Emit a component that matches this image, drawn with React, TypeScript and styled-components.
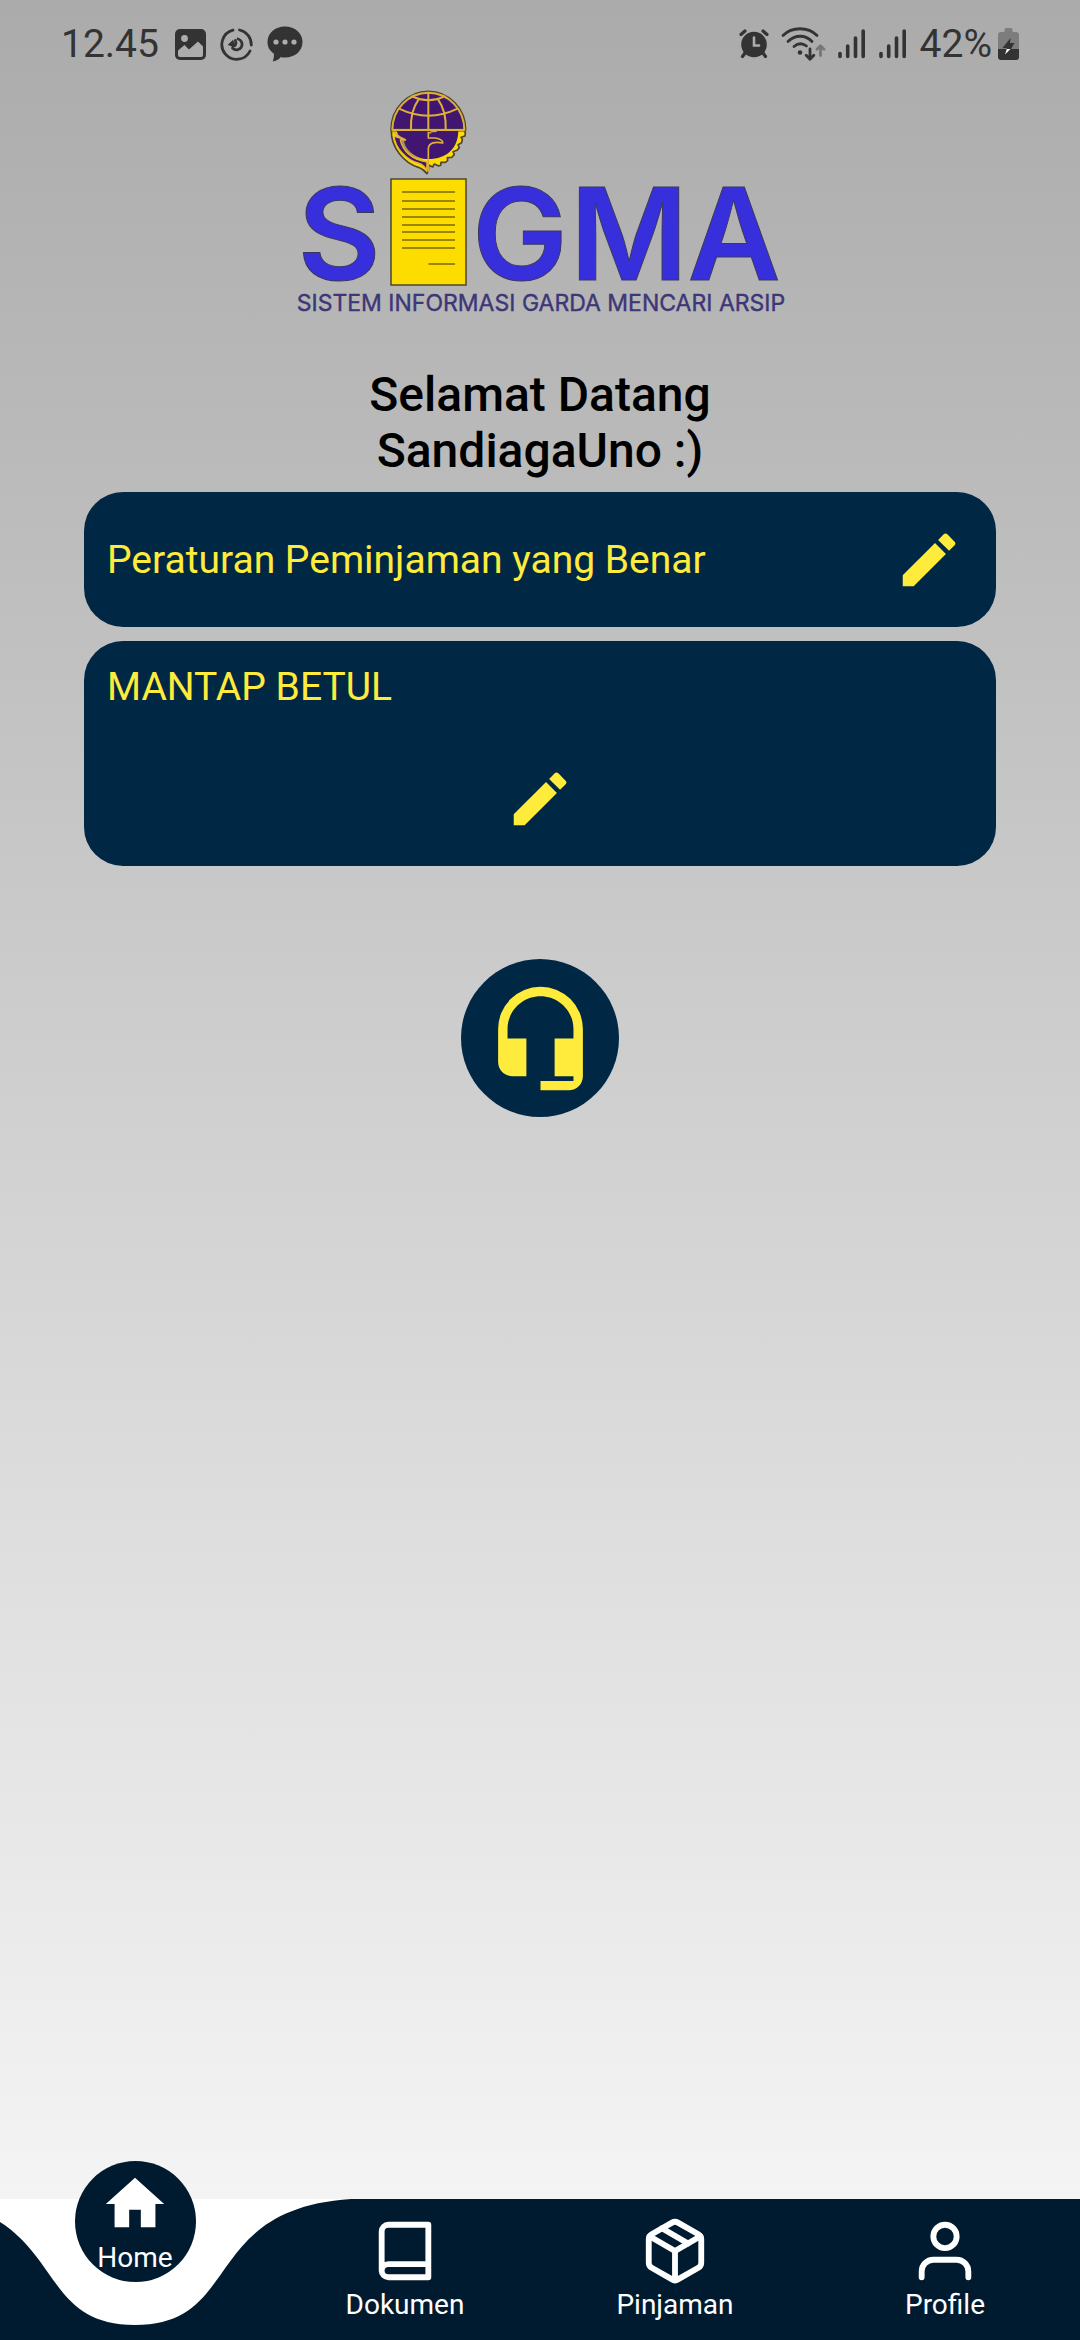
import React from "react";
import styled, { createGlobalStyle } from "styled-components";
import { MdEdit, MdHeadsetMic, MdHome } from "react-icons/md";
import { FiPackage, FiUser } from "react-icons/fi";

const colors = {
  card: "#002845",
  nav: "#001b30",
  accent: "#ffeb3b",
  status: "#333333",
  logoBlue: "#372fdc",
  logoEdge: "#3b3860",
};

const GlobalStyle = createGlobalStyle`
  *, *::before, *::after { box-sizing: border-box; }
  body { margin: 0; font-family: Roboto, "Noto Sans", sans-serif; }
  button { font: inherit; border: 0; cursor: pointer; }
`;

const Page = styled.div`
  min-height: 100vh;
  display: flex;
  flex-direction: column;
`;

const Screen = styled.div`
  flex: 1;
  display: flex;
  flex-direction: column;
  background: linear-gradient(#ababab, #f4f4f4);
`;

const StatusBar = styled.div`
  display: flex;
  justify-content: space-between;
  align-items: center;
  height: 86px;
  padding: 2px 61px 0;
  color: ${colors.status};
  font-size: 39px;
  line-height: 46px;
`;

const StatusGroup = styled.div<{ $gap: number }>`
  display: flex;
  align-items: center;
  gap: ${(p) => p.$gap}px;
  svg { display: block; }
`;

const Content = styled.main`
  display: flex;
  flex-direction: column;
  align-items: center;
  padding: 0 84px;
`;

const Logo = styled.svg`
  display: block;
  width: 500px;
  height: 230px;
`;

const Greeting = styled.h1`
  margin: 51px 0 13px;
  font-size: 48px;
  line-height: 56px;
  font-weight: 500;
  text-align: center;
  color: #000;
`;

const CardList = styled.div`
  align-self: stretch;
  display: flex;
  flex-direction: column;
  gap: 14px;
`;

const Card = styled.section<{ $stacked?: boolean }>`
  display: flex;
  flex-direction: ${(p) => (p.$stacked ? "column" : "row")};
  justify-content: space-between;
  align-items: center;
  gap: ${(p) => (p.$stacked ? 32 : 0)}px;
  padding: ${(p) => (p.$stacked ? "23px 23px 10px" : "11px 10px 10px 23px")};
  border-radius: 39px;
  background: ${colors.card};
  color: ${colors.accent};
`;

const CardText = styled.p<{ $stretch?: boolean }>`
  margin: 0;
  align-self: ${(p) => (p.$stretch ? "stretch" : "center")};
  font-size: 39px;
  line-height: 46px;
`;

const IconButton = styled.button`
  display: flex;
  padding: 22px;
  background: none;
  color: ${colors.accent};
`;

const SupportButton = styled.button`
  display: flex;
  align-items: center;
  justify-content: center;
  width: 158px;
  height: 158px;
  margin: 93px 0;
  padding: 0;
  border-radius: 50%;
  background: ${colors.card};
  color: ${colors.accent};
`;

const NavBar = styled.nav`
  position: relative;
  display: grid;
  grid-template-columns: repeat(4, 1fr);
  height: 141px;
  background: #fff;
`;

const NavShape = styled.svg`
  position: absolute;
  inset: 0;
  width: 100%;
  height: 100%;
`;

const NavItem = styled.button`
  position: relative;
  display: flex;
  flex-direction: column;
  align-items: center;
  gap: 3px;
  padding: 17px 0 0;
  background: none;
  color: #fff;
  font-size: 28px;
  line-height: 32px;
`;

const ActiveSlot = styled.div`
  position: relative;
  display: flex;
  justify-content: center;
`;

const ActiveItem = styled(NavItem)`
  position: absolute;
  top: -38px;
  width: 121px;
  height: 121px;
  padding-top: 8px;
  border-radius: 50%;
  background: ${colors.nav};
`;

const GalleryIcon = () => (
  <svg width="31" height="31" viewBox="0 0 31 31">
    <rect width="31" height="31" rx="5" fill={colors.status} />
    <circle cx="9.5" cy="9.5" r="3.4" fill="#adadad" />
    <path d="M3 21.500 9.500 16l4.500 4.500L23 12.500l5 5V26q0 2-2 2H5q-2 0-2-2Z" fill="#adadad" />
  </svg>
);

const SyncIcon = () => (
  <svg width="33" height="33" viewBox="0 0 33 33" fill="none" stroke={colors.status} strokeWidth="2.8" strokeLinecap="round">
    <path d="M13 2.200A14.800 14.800 0 1 0 30 23" />
    <path d="M19.500 2A14.800 14.800 0 0 1 31.300 17" />
    <path d="M11 16.500C16 20 16.500 15 15.300 12.500M18 11A5.500 5.500 0 1 1 12.500 20" />
    <path d="m8.500 16.500 4.500-4 2 5.500Z" fill={colors.status} strokeWidth="1" />
  </svg>
);

const ChatIcon = () => (
  <svg width="36" height="36" viewBox="0 0 36 36">
    <path d="M18 .5C8 .5.5 7 .5 16c0 5 2.300 9 6.300 11.500.4 3-.3 5.500-1 8 4-1 6.500-2.300 8-4.500 1.500.4 2.800.5 4.200.5 10 0 17.500-6.500 17.500-15.500S28 .5 18 .5Z" fill={colors.status} />
    <g fill="#adadad"><circle cx="9" cy="16" r="2.600" /><circle cx="18" cy="16" r="2.600" /><circle cx="27" cy="16" r="2.600" /></g>
  </svg>
);

const AlarmIcon = () => (
  <svg width="30" height="30" viewBox="0 0 30 30" fill="none" stroke={colors.status} strokeWidth="3.200" strokeLinecap="round">
    <circle cx="15" cy="15.500" r="12.800" fill={colors.status} stroke="none" />
    <path d="M2 5.500 6 2M28 5.500 24 2M6 24l-2.500 3.500M24 24l2.500 3.500" />
    <path d="M15 8.500V16.500H20" stroke="#adadad" strokeWidth="2.600" />
  </svg>
);

const WifiIcon = () => (
  <svg width="45" height="34" viewBox="0 0 45 34" fill="none" stroke={colors.status} strokeWidth="2.800" strokeLinecap="round" strokeLinejoin="round">
    <path d="M2 8.500C11-.5 27-.5 36 8.500M7 14.500C14 7.500 24.500 7.500 31 14.500M13 19.500C17 16 21.500 16 25.500 19" />
    <circle cx="19" cy="25.500" r="2.300" fill={colors.status} stroke="none" />
    <path d="M29 22V32M25.200 28.300 29 32.200 32.800 28.300" />
    <path d="M39.500 28.500V19M36 22.300 39.500 18.800 43 22.300" stroke="#777" />
  </svg>
);

const SignalIcon = () => (
  <svg width="27" height="30" viewBox="0 0 27 30" stroke={colors.status} strokeWidth="3.600" strokeLinecap="round">
    <path d="M2 24.500V27.500M9.700 17V27.500M17.500 9V27.500M25.200 2V27.500" />
  </svg>
);

const BatteryIcon = () => (
  <svg width="21" height="32" viewBox="0 0 21 32">
    <path d="M6.500 4V1.500Q6.500 0 8 0h5q1.500 0 1.500 1.500V4H18q3 0 3 3V21H0V7Q0 4 3 4Z" fill="#7d7d7d" />
    <path d="M0 21H21v8q0 3-3 3H3q-3 0-3-3Z" fill={colors.status} />
    <path d="M12.500 10 4.500 20H9l-.5 1h4.500L16.500 15H12Z" fill={colors.status} />
    <path d="M8.800 21 7 26.500 12.500 21Z" fill="#fff" />
  </svg>
);

const BookIcon = () => (
  <svg width="70" height="70" viewBox="0 0 24 24" fill="none" stroke="currentColor" strokeWidth="2" strokeLinecap="round" strokeLinejoin="round">
    <path d="M20 3H6.300A2.300 2.300 0 0 0 4 5.300V18.700A2.300 2.300 0 0 0 6.300 21H20ZM4 18.700A2.300 2.300 0 0 1 6.300 16.500H20" />
  </svg>
);

const paperLines = [337, 364, 387, 410, 434, 457, 481, 504];

const Emblem = () => (
  <g transform="translate(-10 -6) scale(0.33333)" fill="none" strokeLinejoin="round">
    <path d="M334 150C332 205 375 250 415 262Q432 268 441 281Q447 270 446 255L458 261 463 252 476 258 482 256 483 247 496 247 503 242 502 233 515 232 523 224 519 215 531 211 538 203 534 194 545 188 547 178 543 172 555 168 556 158 552 150Z" fill="#ffdc00" stroke="#4b4730" strokeWidth="5" />
    <path d="M335 150A110 114 0 0 1 555 150Z" fill="#401670" stroke="#4b4730" strokeWidth="9" />
    <path d="M350 153H535C534 205 500 237 445 237 405 237 370 215 350 153Z" fill="#401670" />
    <path d="M342 168C346 205 380 240 414 249Q435 255 440 274L441 246C395 240 368 212 361 180L377 180Z" fill="#401670" stroke="#e4b52d" strokeWidth="4" />
    <path d="M362 180C368 205 390 232 425 238 390 224 372 201 371 182Z" fill="#8d8a80" stroke="#e4b52d" strokeWidth="2" />
    <g stroke="#dfae38" strokeWidth="6">
      <path d="M337 150A108 112 0 0 1 553 150Z" />
      <path d="M445 36V150M396 49Q445 72 494 49M357 86Q445 128 533 86M416 58Q390 94 393 150M474 58Q500 94 497 150" />
      <path d="M340 156 361 172 377 180M445 275V205C447 188 466 184 488 189 490 180 476 176 466 174H445V155" strokeWidth="5" />
      <path d="M445 160 456 155 470 154" strokeWidth="4" />
    </g>
    <path d="M445 162 457 155 452 162Z" fill="#777" />
  </g>
);

const SigmaLogo = () => (
  <Logo viewBox="0 0 500 230" role="img" aria-label="Sigma">
    <Emblem />
    <rect x="101" y="93" width="75" height="106" fill="#fddc00" stroke="#4b4730" strokeWidth="1.500" />
    <g stroke="#9a8600" strokeWidth="2">
      {paperLines.map((y) => (
        <path key={y} d={`M112 ${Math.round(y / 3 - 6)}H165`} />
      ))}
      <path d="M138.500 178H165" />
    </g>
    <g fontFamily='Inter, "Liberation Sans", sans-serif' fontWeight="600" fontSize="128" fill={colors.logoBlue} stroke={colors.logoEdge} strokeWidth="1" textAnchor="middle">
      <text x="49" y="194">S</text>
      <text x="230" y="194">G</text>
      <text x="339" y="194">M</text>
      <text x="444" y="194">A</text>
    </g>
    <text x="251" y="225" textAnchor="middle" fontFamily='Inter, "Liberation Sans", sans-serif' fontWeight="400" fontSize="23" fill="#3d3777" stroke="#3d3777" strokeWidth="0.400">
      SISTEM INFORMASI GARDA MENCARI ARSIP
    </text>
  </Logo>
);

const navItems = [
  { label: "Dokumen", icon: <BookIcon /> },
  { label: "Pinjaman", icon: <FiPackage size={70} /> },
  { label: "Profile", icon: <FiUser size={70} /> },
];

export default function App() {
  return (
    <Page>
      <GlobalStyle />
      <Screen>
        <StatusBar>
          <StatusGroup $gap={16}>
            <span>12.45</span>
            <StatusGroup $gap={14}>
              <GalleryIcon />
              <SyncIcon />
              <ChatIcon />
            </StatusGroup>
          </StatusGroup>
          <StatusGroup $gap={12}>
            <AlarmIcon />
            <WifiIcon />
            <StatusGroup $gap={14}>
              <SignalIcon />
              <SignalIcon />
              <StatusGroup $gap={6}>
                <span>42%</span>
                <BatteryIcon />
              </StatusGroup>
            </StatusGroup>
          </StatusGroup>
        </StatusBar>
        <Content>
          <SigmaLogo />
          <Greeting>
            Selamat Datang
            <br />
            SandiagaUno :)
          </Greeting>
          <CardList>
            <Card>
              <CardText>Peraturan Peminjaman yang Benar</CardText>
              <IconButton aria-label="Edit">
                <MdEdit size={70} />
              </IconButton>
            </Card>
            <Card $stacked>
              <CardText $stretch>MANTAP BETUL</CardText>
              <IconButton aria-label="Edit">
                <MdEdit size={70} />
              </IconButton>
            </Card>
          </CardList>
          <SupportButton aria-label="Support">
            <MdHeadsetMic size={113} />
          </SupportButton>
        </Content>
      </Screen>
      <NavBar>
        <NavShape viewBox="0 0 1080 141" preserveAspectRatio="none" aria-hidden="true">
          <path d="M-81 0C70 10 27 126 135 126S200 10 351 0H1080V141H-81Z" fill={colors.nav} />
        </NavShape>
        <ActiveSlot>
          <ActiveItem aria-current="page">
            <MdHome size={70} />
            Home
          </ActiveItem>
        </ActiveSlot>
        {navItems.map((item) => (
          <NavItem key={item.label}>
            {item.icon}
            {item.label}
          </NavItem>
        ))}
      </NavBar>
    </Page>
  );
}
